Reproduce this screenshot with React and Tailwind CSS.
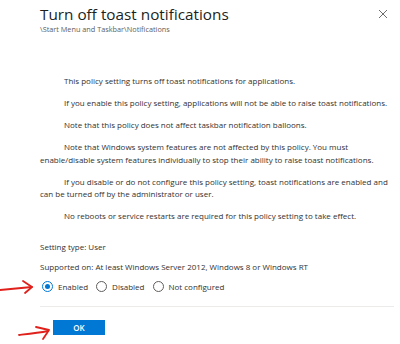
import React from "react";

const paragraphs = [
  "This policy setting turns off toast notifications for applications.",
  "If you enable this policy setting, applications will not be able to raise toast notifications.",
  "Note that this policy does not affect taskbar notification balloons.",
  "Note that Windows system features are not affected by this policy.  You must enable/disable system features individually to stop their ability to raise toast notifications.",
  "If you disable or do not configure this policy setting, toast notifications are enabled and can be turned off by the administrator or user.",
  "No reboots or service restarts are required for this policy setting to take effect.",
];

function Radio({ label, checked }) {
  return (
    <label className="flex items-center gap-[5px]">
      <span
        className={
          checked
            ? "flex h-[11px] w-[11px] items-center justify-center rounded-full border border-[#0078d4]"
            : "flex h-[11px] w-[11px] items-center justify-center rounded-full border border-[#605e5c]"
        }
      >
        {checked && <span className="h-[5px] w-[5px] rounded-full bg-[#0078d4]" />}
      </span>
      <span>{label}</span>
    </label>
  );
}

export default function App() {
  return (
    <div
      className="relative h-[344px] w-[400px] overflow-hidden bg-white text-[#323130]"
      style={{ fontFamily: '"Open Sans", "Noto Sans", sans-serif' }}
    >
      {/* Header */}
      <div className="flex items-start justify-between pl-[40px] pr-[12px] pt-[3px]">
        <div>
          <h1 className="text-[15.3px] leading-[22px] font-normal text-[#201f1e]">
            Turn off toast notifications
          </h1>
          <div className="text-[7.3px] leading-[9px] text-[#605e5c]">
            \Start Menu and Taskbar\Notifications
          </div>
        </div>
        <button className="mt-[6px] text-[#605e5c]">
          <svg width="10" height="10" viewBox="0 0 10 10" fill="none" stroke="currentColor" strokeWidth="0.9">
            <path d="M1 1l8 8M9 1l-8 8" />
          </svg>
        </button>
      </div>

      {/* Description */}
      <div className="mt-[41px] flex flex-col gap-[9.5px] pl-[40px] pr-[4px] text-[8px] leading-[12.5px]">
        {paragraphs.map((p) => (
          <p key={p} className="indent-6">
            {p}
          </p>
        ))}
      </div>

      <div className="mt-[18px] flex flex-col gap-[8px] pl-[40px] text-[8px] leading-[12px]">
        <div>Setting type: User</div>
        <div>Supported on: At least Windows Server 2012, Windows 8 or Windows RT</div>
        <div className="flex items-center gap-[8px] pl-[2px]">
          <Radio label="Enabled" checked />
          <Radio label="Disabled" />
          <Radio label="Not configured" />
        </div>
      </div>

      <div className="ml-[40px] mr-[6px] mt-[13px] border-t border-[#edebe9]" />

      <div className="flex pl-[53px] pt-[13px]">
        <button className="h-[15px] w-[52px] bg-[#0078d4] text-[8px] font-semibold leading-[15px] text-white">
          OK
        </button>
      </div>

      {/* red annotation arrows */}
      <svg className="absolute left-0 top-0" width="60" height="344" fill="none" stroke="#e0201b" strokeWidth="1.8" strokeLinecap="round" strokeLinejoin="round">
        <path d="M0 290 C10 289 22 288 32 287" />
        <path d="M23 281 L32 287 L25 293" />
        <path d="M19 335 C28 334 38 333 48 331" />
        <path d="M36 327 L49 330 L43 339" />
      </svg>
    </div>
  );
}
